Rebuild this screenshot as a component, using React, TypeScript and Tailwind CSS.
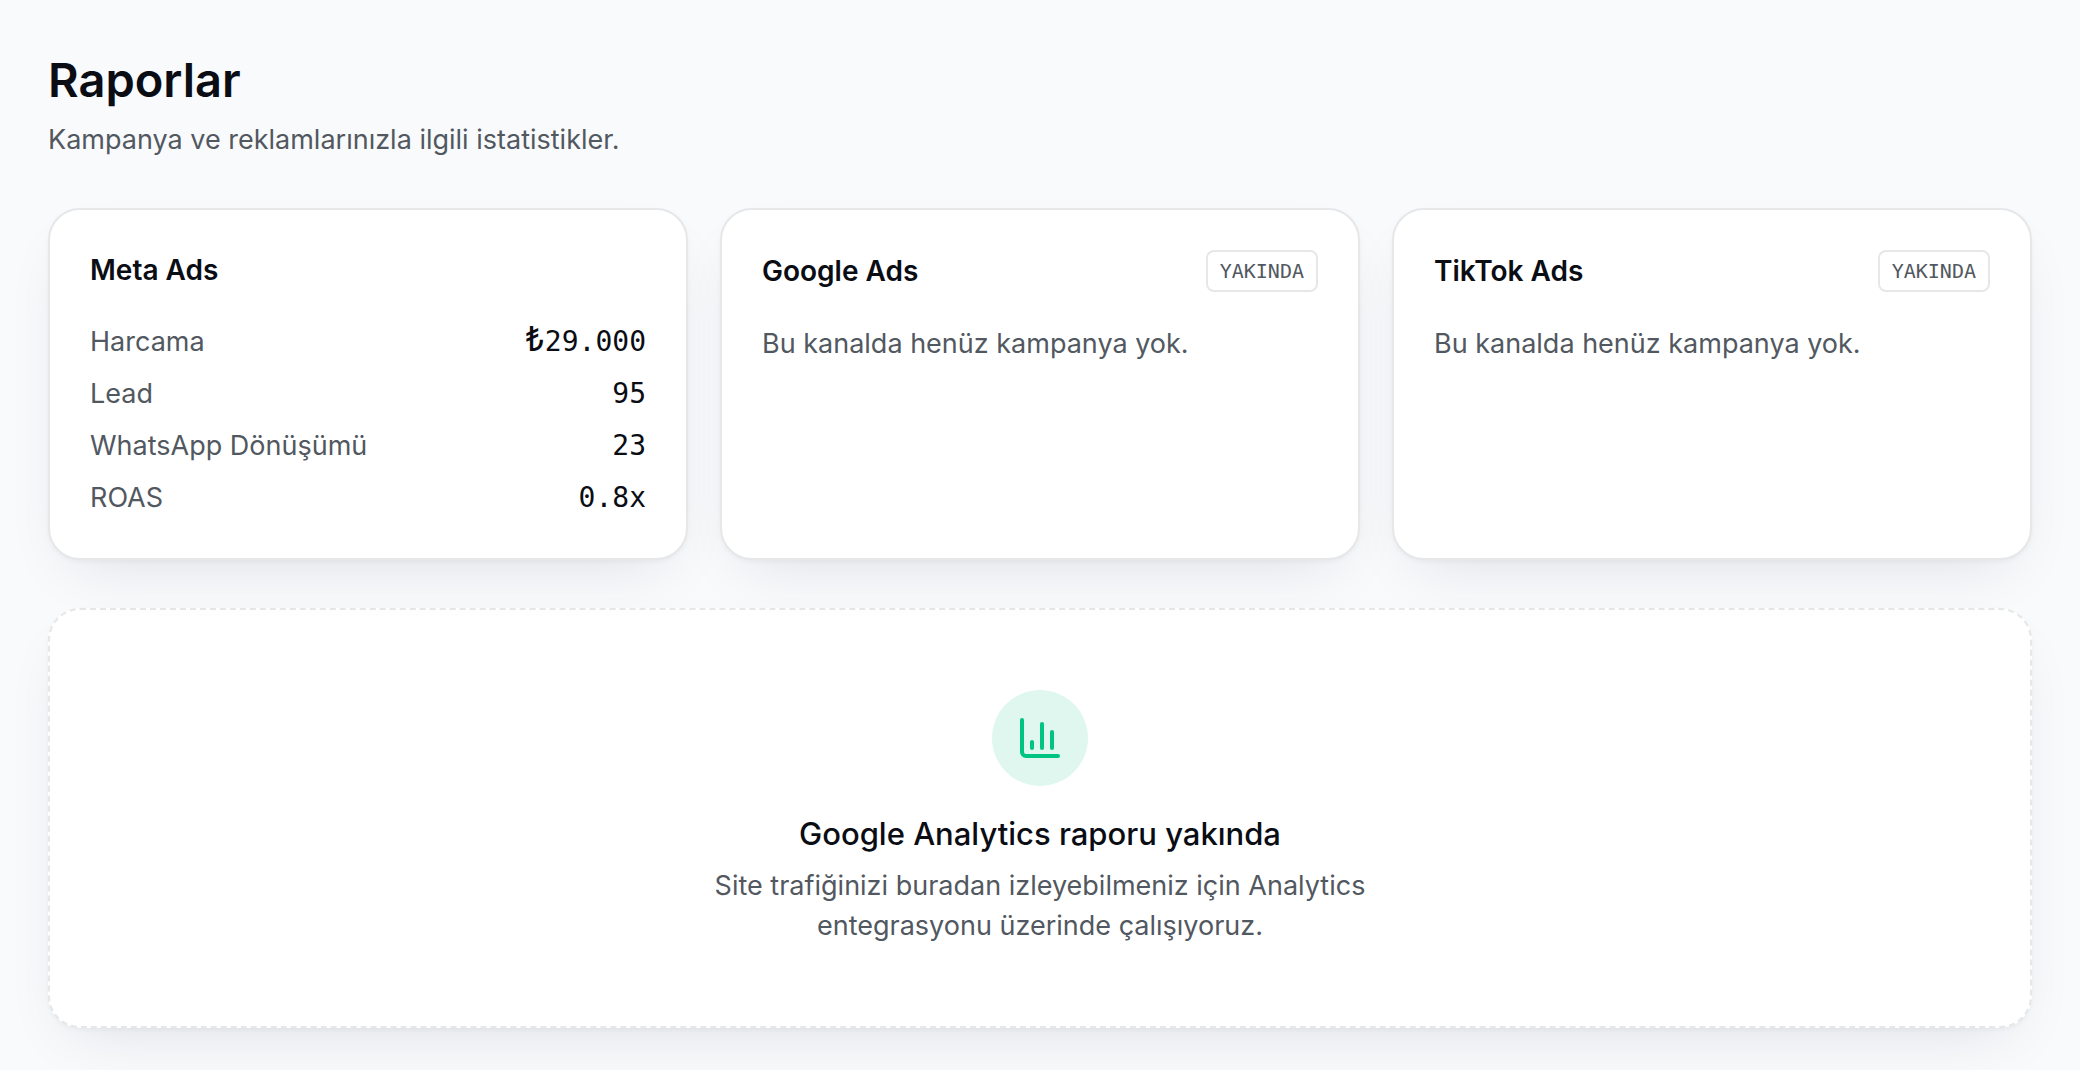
import { ChartColumn } from "lucide-react"

const stats = [
    { label: "Harcama", prefix: "₺", value: "29.000" },
    { label: "Lead", value: "95" },
    { label: "WhatsApp Dönüşümü", value: "23" },
    { label: "ROAS", value: "0.8x" },
]

const upcoming = ["Google Ads", "TikTok Ads"]

const panel = "rounded-[32px] border-2 border-[#e6e7e9] bg-white shadow-[0_2px_4px_rgba(15,15,40,0.04),0_24px_64px_-24px_rgba(15,15,40,0.12)]"

function UpcomingCard({ title }: { title: string }) {
    return (
        <section className={`${panel} p-10`}>
            <div className="flex items-center justify-between">
                <h2 className="text-[28px] leading-10 font-semibold">{title}</h2>
                <span className="rounded-lg border-2 border-[#e6e7e9] px-3 py-1 font-['DejaVu_Sans_Mono',monospace] text-[20px] leading-[30px] text-[#52585f]">YAKINDA</span>
            </div>
            <p className="mt-8 text-[27px] leading-10 text-[#52585f]">Bu kanalda henüz kampanya yok.</p>
        </section>
    )
}

export default function App() {
    return (
        <main className="min-h-screen bg-[#f9fafc] px-12 pt-12 pb-10 font-['Inter',sans-serif] text-[#0a0d14]">
            <h1 className="text-[47px] leading-[64px] font-semibold">Raporlar</h1>
            <p className="mt-2 text-[27px] leading-10 text-[#52585f]">Kampanya ve reklamlarınızla ilgili istatistikler.</p>

            <div className="mt-12 grid grid-cols-3 gap-8">
                <section className={`${panel} p-10`}>
                    <h2 className="text-[28px] leading-10 font-semibold">Meta Ads</h2>
                    <dl className="mt-8 flex flex-col gap-3 text-[27px] leading-10">
                        {stats.map((stat) => (
                            <div key={stat.label} className="flex h-10 items-baseline justify-between">
                                <dt className="text-[#52585f]">{stat.label}</dt>
                                <dd className="font-['DejaVu_Sans_Mono',monospace] text-[28px]">
                                    {stat.prefix && <span className="font-['Inter',sans-serif] text-[34px] leading-none">{stat.prefix}</span>}
                                    {stat.value}
                                </dd>
                            </div>
                        ))}
                    </dl>
                </section>
                {upcoming.map((title) => <UpcomingCard key={title} title={title} />)}
            </div>

            <section className={`${panel} mt-12 flex flex-col items-center border-dashed py-20 text-center`}>
                <div className="flex size-24 items-center justify-center rounded-full bg-[#e0f7ef] text-[#00c482]">
                    <ChartColumn size={48} />
                </div>
                <h2 className="mt-6 text-[31px] leading-[48px] font-medium">Google Analytics raporu yakında</h2>
                <p className="mt-2 max-w-[700px] text-[27px] leading-10 text-[#52585f]">Site trafiğinizi buradan izleyebilmeniz için Analytics entegrasyonu üzerinde çalışıyoruz.</p>
            </section>
        </main>
    )
}
